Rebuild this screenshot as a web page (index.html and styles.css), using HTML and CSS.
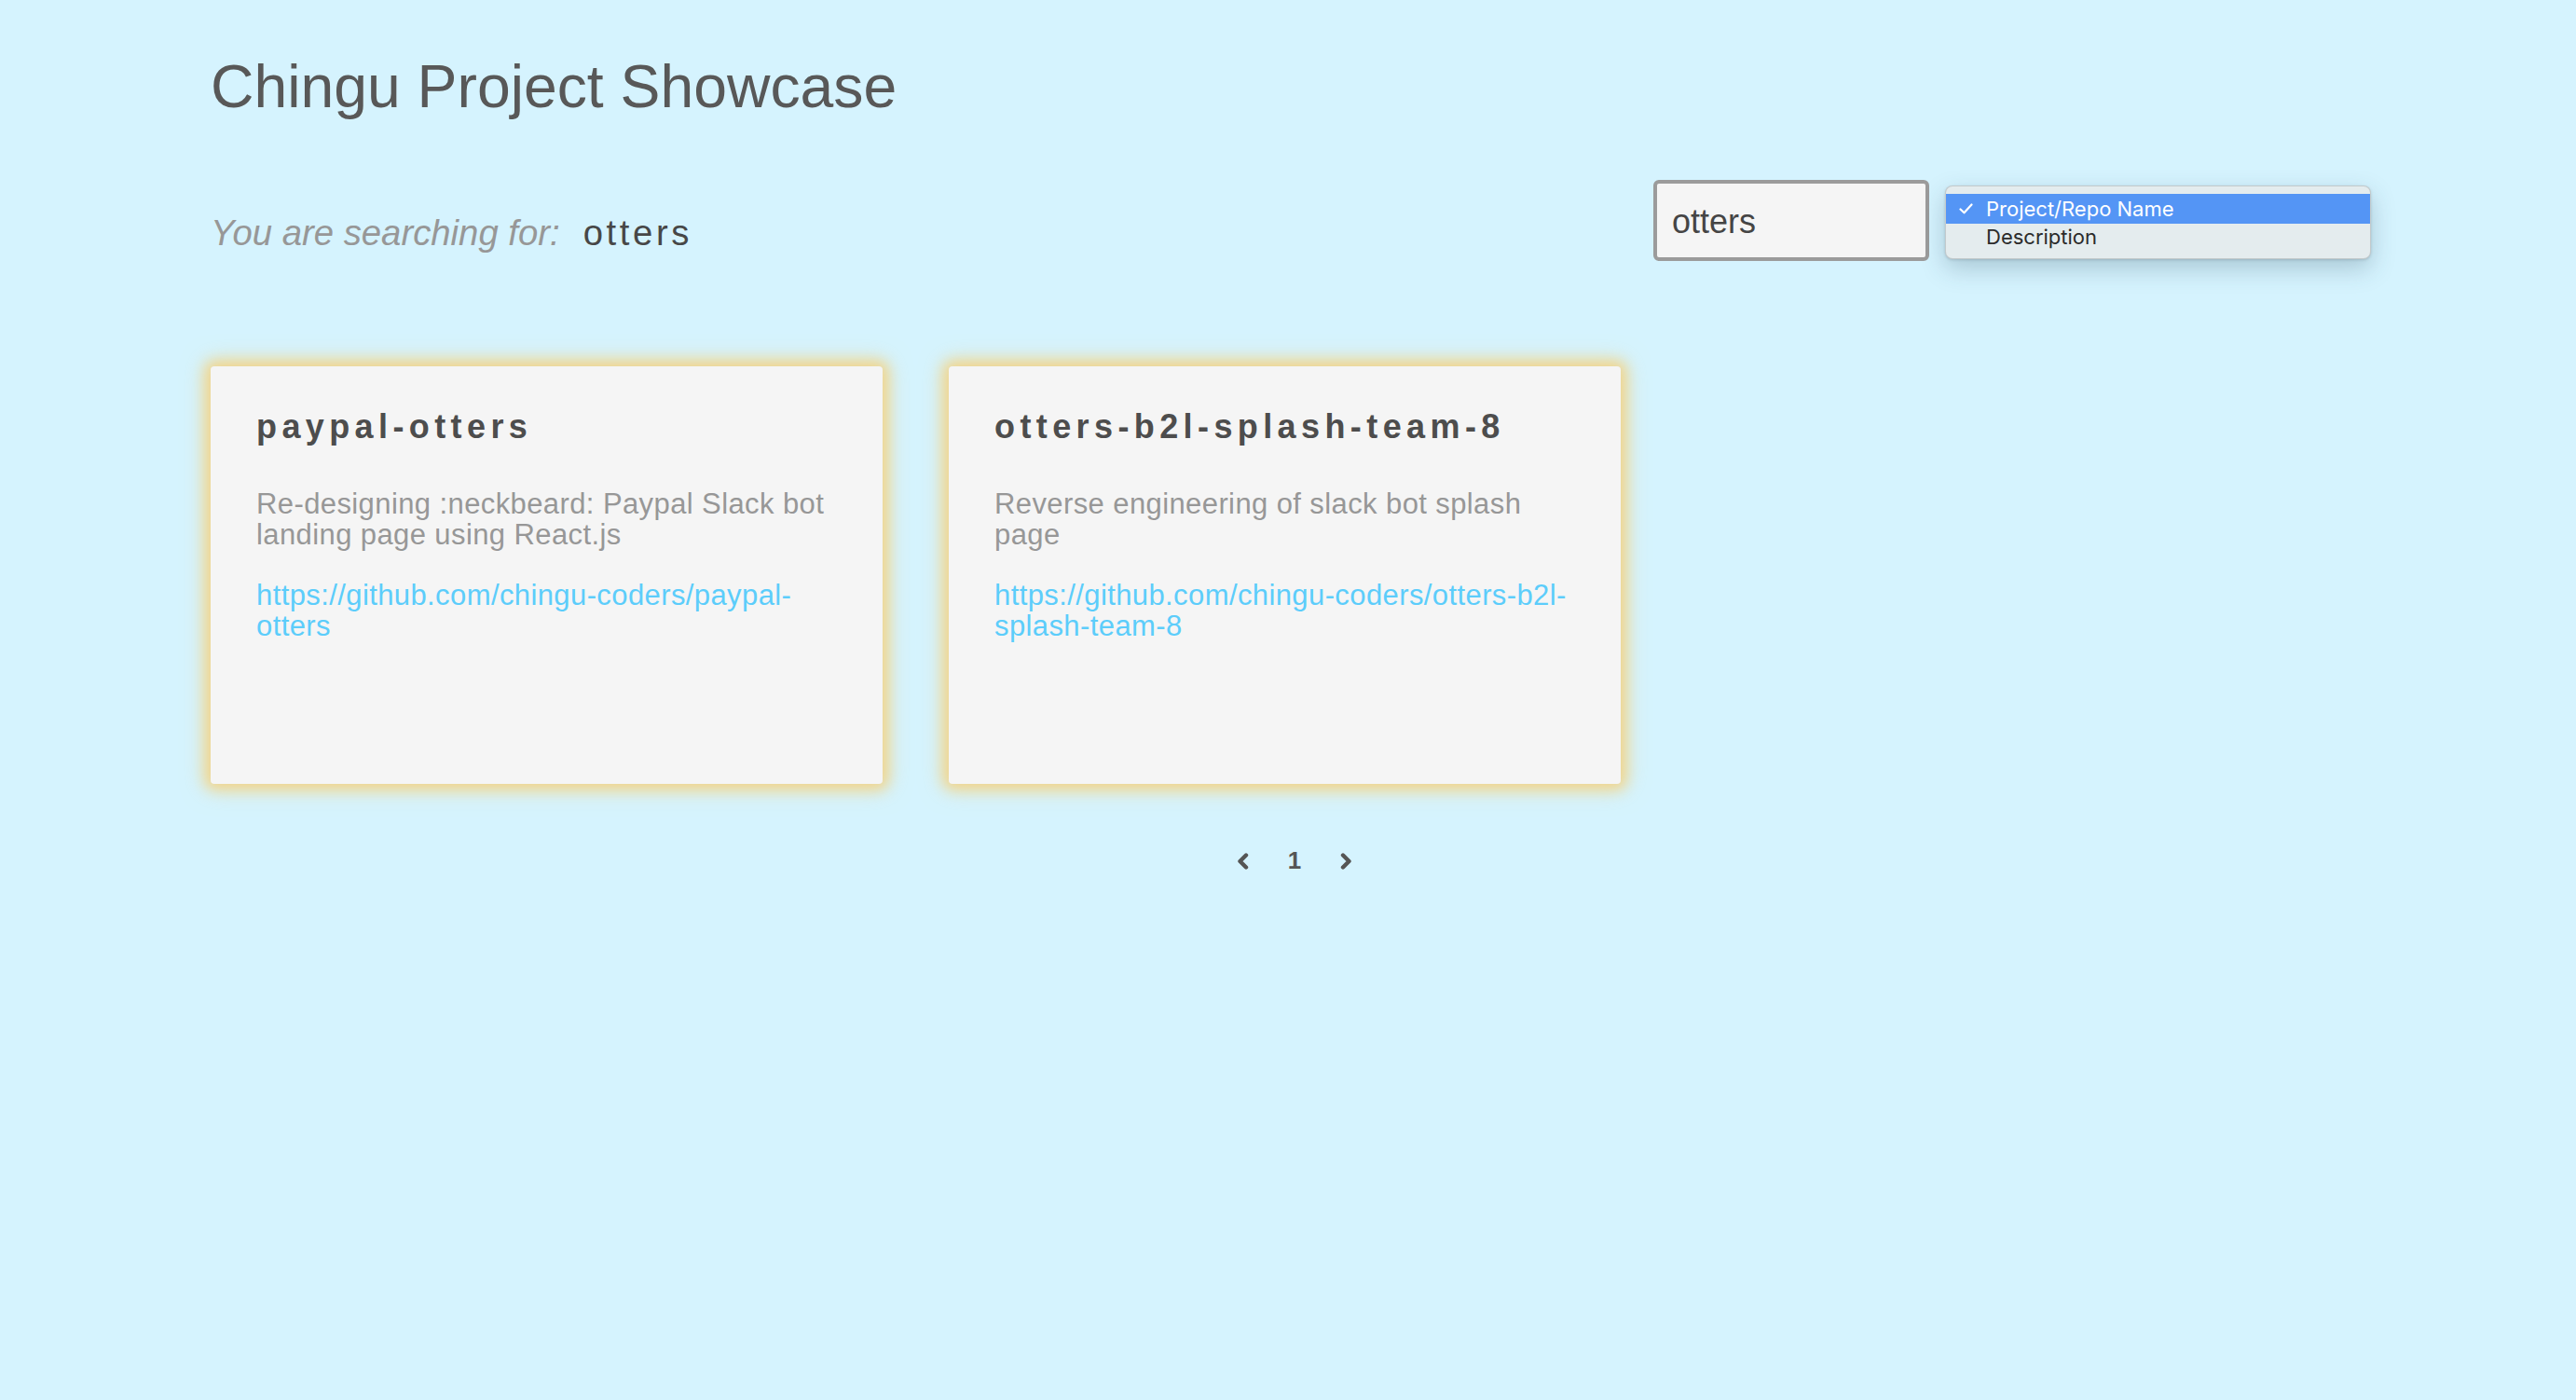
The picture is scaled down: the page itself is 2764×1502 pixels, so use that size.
FILE: index.html
```html
<!DOCTYPE html>
<html lang="en">
<head>
<meta charset="utf-8">
<title>Chingu Project Showcase</title>
<link rel="stylesheet" href="styles.css">
</head>
<body>
<div class="page">
  <h1 class="title">Chingu Project Showcase</h1>

  <div class="search-row">
    <p class="searching"><span class="searching-label">You are searching for:</span><span class="searching-term">otters</span></p>
    <div class="search-controls">
      <input class="search-input" type="text" value="otters">
      <div class="select-menu" role="listbox">
        <div class="option option-selected" role="option">
          <span class="check-slot"><svg class="check" width="15" height="12" viewBox="0 0 15 12"><polyline points="1.5,6.5 5.5,10.3 13.5,1.5" fill="none" stroke="#ffffff" stroke-width="2.2" stroke-linecap="round" stroke-linejoin="round"/></svg></span>
          <span>Project/Repo Name</span>
        </div>
        <div class="option" role="option">
          <span class="check-slot"></span>
          <span>Description</span>
        </div>
      </div>
    </div>
  </div>

  <div class="cards">
    <article class="card">
      <h2 class="card-title">paypal-otters</h2>
      <p class="card-desc">Re-designing :neckbeard: Paypal Slack bot landing page using React.js</p>
      <a class="card-link" href="#">https://github.com/chingu-coders/paypal-otters</a>
    </article>
    <article class="card">
      <h2 class="card-title">otters-b2l-splash-team-8</h2>
      <p class="card-desc">Reverse engineering of slack bot splash page</p>
      <a class="card-link" href="#">https://github.com/chingu-coders/otters-b2l-splash-team-8</a>
    </article>
  </div>

  <nav class="pager">
    <span class="pager-arrow"><svg width="14" height="20" viewBox="0 0 14 20"><polyline points="11,3.5 4.5,10 11,16.5" fill="none" stroke="#555555" stroke-width="4.4" stroke-linecap="round" stroke-linejoin="round"/></svg></span>
    <span class="pager-num">1</span>
    <span class="pager-arrow"><svg width="14" height="20" viewBox="0 0 14 20"><polyline points="3,3.5 9.5,10 3,16.5" fill="none" stroke="#555555" stroke-width="4.4" stroke-linecap="round" stroke-linejoin="round"/></svg></span>
  </nav>
</div>
</body>
</html>
```

FILE: styles.css
```css
html, body {
  margin: 0;
  padding: 0;
}

body {
  background: #d5f3fe;
  font-family: "Liberation Sans", Arial, Helvetica, sans-serif;
  min-height: 1502px;
}

.page {
  width: 2326px;
  margin-left: 226px;
  padding-top: 56px;
}

.title {
  margin: 0;
  font-size: 64.3px;
  font-weight: 400;
  line-height: normal;
  color: #585858;
}

.search-row {
  display: flex;
  justify-content: space-between;
  align-items: flex-start;
  margin-top: 63px;
}

.searching {
  margin: 35px 0 0;
  font-size: 38.3px;
  line-height: normal;
}

.searching-label {
  font-style: italic;
  color: #979797;
}

.searching-term {
  margin-left: 25px;
  letter-spacing: 3.6px;
  color: #474747;
}

.search-controls {
  display: flex;
  align-items: flex-start;
  gap: 17px;
  margin-right: 8px;
}

.search-input {
  box-sizing: border-box;
  width: 296px;
  height: 87px;
  margin: 0;
  padding: 2px 16px 0;
  border: 4px solid #9b9b9b;
  border-radius: 6px;
  background: #f5f5f5;
  font-family: "Liberation Sans", Arial, sans-serif;
  font-size: 36px;
  color: #454545;
  outline: none;
}

.select-menu {
  box-sizing: border-box;
  width: 457px;
  height: 79px;
  margin-top: 6px;
  padding: 8px 0 10px;
  background: #e4ecee;
  border: 1px solid rgba(0, 0, 0, 0.14);
  border-radius: 8px;
  box-shadow: 0 10px 26px rgba(40, 70, 90, 0.25), 0 1px 3px rgba(0, 0, 0, 0.15);
  font-family: Inter, "Liberation Sans", sans-serif;
  font-size: 22px;
}

.option {
  display: flex;
  align-items: center;
  height: 28px;
  padding-left: 14px;
  color: #2b2b2b;
}

.option-selected {
  height: 32px;
  background: #5495f5;
  color: #ffffff;
}

.check-slot {
  display: flex;
  align-items: center;
  width: 15px;
  margin-right: 14px;
}

.cards {
  display: grid;
  grid-template-columns: repeat(3, 721px);
  column-gap: 71px;
  margin-top: 113px;
}

.card {
  box-sizing: border-box;
  height: 448px;
  padding: 44px 49px;
  background: #f5f5f5;
  border-radius: 4px;
  box-shadow: 0 0 14px 5px #f1d68e, 0 0 24px 6px rgba(241, 214, 142, 0.6);
}

.card-title {
  margin: 0;
  font-size: 36px;
  font-weight: 700;
  letter-spacing: 5.4px;
  line-height: normal;
  color: #4d4d4d;
}

.card-desc {
  margin: 46px 0 0;
  font-size: 31px;
  line-height: 32.5px;
  letter-spacing: 0.4px;
  color: #979797;
}

.card-link {
  display: block;
  margin-top: 32px;
  font-size: 31px;
  line-height: 33px;
  letter-spacing: 0.4px;
  color: #5ccdfb;
  text-decoration: none;
}

.pager {
  display: flex;
  justify-content: center;
  align-items: center;
  gap: 42px;
  margin-top: 67px;
}

.pager-arrow {
  display: flex;
}

.pager-num {
  font-size: 26px;
  font-weight: 700;
  line-height: normal;
  color: #555555;
}
```
